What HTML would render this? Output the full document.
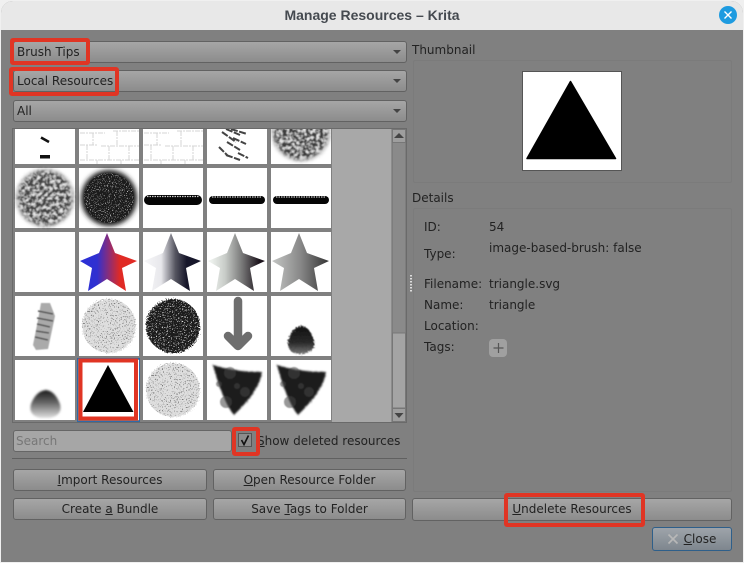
<!DOCTYPE html>
<html><head><meta charset="utf-8"><style>
html,body{margin:0;padding:0;background:#fff}
#w{position:relative;width:744px;height:563px;overflow:hidden;background:#f0f0f0;font:12px/16px "DejaVu Sans",sans-serif;color:#222}
#win{position:absolute;left:1px;top:1px;width:742px;height:561px;background:#808080;border-radius:12px 12px 0 0;overflow:hidden}
#title{position:absolute;width:742px;height:29px;background:#e8e8e8;text-align:center;font:bold 14px/29px "Liberation Sans",sans-serif;color:#454a50}
.a{position:absolute}
.t{position:absolute;white-space:nowrap}
.c,.b{position:absolute;box-sizing:border-box;border:1px solid #626262;border-radius:3px;background:linear-gradient(#a6a6a6,#8c8c8c)}
.b{text-align:center;line-height:20px;white-space:nowrap}
.c span{position:absolute;left:3px;top:2px;white-space:nowrap}
.c i{position:absolute;right:5px;top:8px;border:4px solid transparent;border-top:4px solid #444;border-bottom:0}
.f{position:absolute;box-sizing:border-box;border:1px solid #7b7b7b;border-radius:2px}
.r{position:absolute;box-sizing:border-box;border:4px solid #e03524;border-radius:3px}
u{text-decoration:underline}
</style></head><body><div id="w">
<div id="win"></div>
<div id="title" style="left:1px;top:1px;border-radius:12px 12px 0 0">Manage Resources – Krita</div>
<svg class="a" style="left:719px;top:6px" width="18" height="18"><circle cx="9" cy="9" r="9" fill="#1e9be0"/><path d="M5.500 5.500L12.500 12.500M12.500 5.500L5.500 12.500" stroke="#fff" stroke-width="1.400"/></svg>

<div class="c" style="left:13px;top:41px;width:394px;height:22px"><span>Brush Tips</span><i></i></div>
<div class="c" style="left:13px;top:70px;width:394px;height:22px"><span>Local Resources</span><i></i></div>
<div class="c" style="left:13px;top:100px;width:394px;height:22px"><span>All</span><i></i></div>

<div class="a" style="left:12px;top:128px;width:395px;height:295px;box-sizing:border-box;border:1px solid #6a6a6a;background:#a8a8a8;overflow:hidden"></div>
<svg class="a" style="left:13px;top:129px" width="393" height="293" viewBox="13 129 393 293">
<defs>
<filter id="sp" x="-10%" y="-10%" width="120%" height="120%"><feTurbulence type="fractalNoise" baseFrequency=".95" numOctaves="2" seed="3"/><feColorMatrix values="0 0 0 0 .8 0 0 0 0 .8 0 0 0 0 .8 6 0 0 0 -3.700"/><feComposite in2="SourceGraphic" operator="in" result="n"/><feMerge><feMergeNode in="SourceGraphic"/><feMergeNode in="n"/></feMerge></filter>
<filter id="sp2" x="-15%" y="-15%" width="130%" height="130%"><feTurbulence type="fractalNoise" baseFrequency=".8" numOctaves="2" seed="11" result="t"/><feDisplacementMap in="SourceGraphic" in2="t" scale="6" result="d"/><feColorMatrix in="t" values="0 0 0 0 .85 0 0 0 0 .85 0 0 0 0 .85 7 0 0 0 -4.300"/><feComposite in2="d" operator="in" result="n"/><feMerge><feMergeNode in="d"/><feMergeNode in="n"/></feMerge></filter>
<filter id="big" x="-15%" y="-15%" width="130%" height="130%"><feGaussianBlur in="SourceGraphic" stdDeviation="2" result="s"/><feTurbulence type="fractalNoise" baseFrequency=".3" numOctaves="3" seed="5"/><feColorMatrix values="0 0 0 0 .8 0 0 0 0 .8 0 0 0 0 .8 3.500 0 0 0 -1.500"/><feComposite in2="s" operator="in"/><feGaussianBlur stdDeviation=".5" result="n"/><feMerge><feMergeNode in="s"/><feMergeNode in="n"/></feMerge></filter>
<filter id="lite" x="-15%" y="-15%" width="130%" height="130%"><feTurbulence type="fractalNoise" baseFrequency=".75" numOctaves="2" seed="9" result="t"/><feDisplacementMap in="SourceGraphic" in2="t" scale="5" result="d"/><feColorMatrix in="t" values="0 0 0 0 .15 0 0 0 0 .15 0 0 0 0 .15 8 0 0 0 -4.700"/><feComposite in2="d" operator="in" result="n"/><feMerge><feMergeNode in="d"/><feMergeNode in="n"/></feMerge></filter>
<filter id="cut" x="-20%" y="-20%" width="140%" height="140%"><feTurbulence type="fractalNoise" baseFrequency=".7" numOctaves="2" seed="7" result="t"/><feDisplacementMap in="SourceGraphic" in2="t" scale="2"/><feGaussianBlur stdDeviation=".9"/></filter>
<filter id="cut2" x="-20%" y="-20%" width="140%" height="140%"><feTurbulence type="fractalNoise" baseFrequency=".8" numOctaves="2" seed="4" result="t"/><feDisplacementMap in="SourceGraphic" in2="t" scale="5"/><feGaussianBlur stdDeviation=".6"/></filter>
<filter id="bl05"><feGaussianBlur stdDeviation=".6"/></filter>
<filter id="bl1"><feGaussianBlur stdDeviation="1"/></filter>
<filter id="bl2" x="-15%" y="-15%" width="130%" height="130%"><feGaussianBlur stdDeviation="2.500"/></filter>
<linearGradient id="g1"><stop offset="0" stop-color="#2a2fd8"/><stop offset=".3" stop-color="#3030d0"/><stop offset=".7" stop-color="#e02a24"/></linearGradient>
<linearGradient id="g2"><stop offset=".05" stop-color="#f4f4f6"/><stop offset=".3" stop-color="#e8e8ec"/><stop offset=".55" stop-color="#555560"/><stop offset=".75" stop-color="#16162a"/></linearGradient>
<linearGradient id="g3"><stop offset=".05" stop-color="#eef2ee"/><stop offset=".3" stop-color="#c8ccc8"/><stop offset=".6" stop-color="#777"/><stop offset=".9" stop-color="#1c141c"/></linearGradient>
<linearGradient id="g4"><stop offset="0" stop-color="#c4c6c4"/><stop offset=".5" stop-color="#888"/><stop offset="1" stop-color="#333"/></linearGradient>
<linearGradient id="gd" x1="0" y1="0" x2="0" y2="1"><stop offset="0" stop-color="#1c1c1c"/><stop offset=".45" stop-color="#666"/><stop offset="1" stop-color="#e0e0e0"/></linearGradient>
<linearGradient id="gd2" x1="0" y1="0" x2="0" y2="1"><stop offset="0" stop-color="#111"/><stop offset=".6" stop-color="#2a2a2a"/><stop offset="1" stop-color="#777"/></linearGradient>
<path id="star" d="M28 1L36 21L58 29L43 36L47 59L28 47L9 59L13 36L1 29L20 21Z"/>
<g id="bricks" stroke="#d4d4d4" stroke-width="1" fill="none" stroke-dasharray="5 1 2 1"><path d="M1 4H26M34 2H60M1 16H18M22 17H60M14 4V16M38 2V17M1 31H60M8 16V31M30 17V31M50 17V31M18 31V35M42 31V35"/></g>
<g id="pie" filter="url(#bl05)"><path d="M6 5Q28 12 55 12Q53 30 27 55Q16 42 6 5Z" fill="#1e1e1e" filter="url(#cut)"/><g fill="#444" fill-opacity=".55"><circle cx="23" cy="13" r="6"/><circle cx="19" cy="42" r="6"/><circle cx="38" cy="32" r="5"/><circle cx="30" cy="26" r="3"/><circle cx="12" cy="24" r="3"/></g></g>
<circle id="spk" r="27" fill="#dedede" filter="url(#lite)"/>
</defs>
<rect x="13" y="129" width="319" height="293" fill="#808080"/>
<!-- row 1 -->
<g fill="#fff"><rect x="15" y="129" width="60" height="35"/><rect x="79" y="129" width="60" height="35"/><rect x="143" y="129" width="60" height="35"/><rect x="207" y="129" width="60" height="35"/><rect x="271" y="129" width="60" height="35"/></g>
<path d="M41 137.500L49 142" stroke="#111" stroke-width="2.600"/><rect x="40" y="155" width="10" height="3.500" fill="#111"/>
<g transform="translate(79 129)"><use href="#bricks"/></g><g transform="translate(143 129)"><use href="#bricks"/></g>
<path d="M226 129L240 135M222 132L236 142M231 129L247 134M219 147L228 156M227 142L240 150M226 155L240 160M238 153L248 158M233 138L246 144" stroke="#444" stroke-width="2" stroke-dasharray="7 1.500"/>
<clipPath id="cr1"><rect x="271" y="129" width="60" height="35"/></clipPath>
<g clip-path="url(#cr1)"><circle cx="301" cy="132" r="28" fill="#3c3c3c" filter="url(#big)"/></g>
<!-- row 2 -->
<g fill="#fff"><rect x="15" y="168" width="60" height="60"/><rect x="79" y="168" width="60" height="60"/><rect x="143" y="168" width="60" height="60"/><rect x="207" y="168" width="60" height="60"/><rect x="271" y="168" width="60" height="60"/></g>
<circle cx="45" cy="198" r="28" fill="#444" filter="url(#big)"/>
<circle cx="109" cy="198" r="28" fill="#222" filter="url(#bl2)"/><circle cx="109" cy="198" r="25" fill="#1a1a1a" filter="url(#sp)" opacity=".95"/>
<rect x="144" y="195" width="58" height="10" rx="5" fill="#050505"/><rect x="209" y="196" width="56" height="8" rx="4" fill="#050505"/><rect x="273" y="196" width="56" height="8" rx="4" fill="#050505"/>
<path d="M147 196.500H199M212 197H262M276 197H326" stroke="#ccc" stroke-width="1.200" stroke-dasharray="1.500 1"/>
<!-- row 3 -->
<g fill="#fff"><rect x="15" y="232" width="60" height="60"/><rect x="79" y="232" width="60" height="60"/><rect x="143" y="232" width="60" height="60"/><rect x="207" y="232" width="60" height="60"/><rect x="271" y="232" width="60" height="60"/></g>
<use href="#star" transform="translate(79 232)" fill="url(#g1)"/><use href="#star" transform="translate(143 232)" fill="url(#g2)"/><use href="#star" transform="translate(207 232)" fill="url(#g3)"/><use href="#star" transform="translate(271 232)" fill="url(#g4)"/>
<!-- row 4 -->
<g fill="#fff"><rect x="15" y="296" width="60" height="60"/><rect x="79" y="296" width="60" height="60"/><rect x="143" y="296" width="60" height="60"/><rect x="207" y="296" width="60" height="60"/><rect x="271" y="296" width="60" height="60"/></g>
<g filter="url(#bl05)"><path d="M41 303H50L55 316L48 349L36 350L33 345L38 320Z" fill="#aaa"/><path d="M38 311L53 314M37 318L53 321M37 324L50 327M36 331L49 333M35 337L48 340" stroke="#555" stroke-width="1.600"/></g>
<use href="#spk" x="109" y="326"/>
<circle cx="173" cy="326" r="27" fill="#1c1c1c" filter="url(#sp2)"/>
<path d="M238 301V344M228 336L238 346L248 336" fill="none" stroke="#6e6e6e" stroke-width="8.500" stroke-linecap="round" stroke-linejoin="round"/>
<path d="M301 326Q309 326 313 338Q318 351 303 354Q287 355 288 342Q291 328 301 326Z" fill="url(#gd2)" filter="url(#cut2)"/>
<!-- row 5 -->
<g fill="#fff"><rect x="15" y="360" width="60" height="60"/><rect x="79" y="360" width="60" height="60"/><rect x="143" y="360" width="60" height="60"/><rect x="207" y="360" width="60" height="60"/><rect x="271" y="360" width="60" height="60"/></g>
<path d="M46 390Q55 391 60 404Q63 415 50 418H40Q28 415 31 404Q36 391 46 390Z" fill="url(#gd)" filter="url(#bl1)"/>
<use href="#spk" x="173" y="390"/>
<g transform="translate(207 360)"><use href="#pie"/></g><g transform="translate(271 360)"><use href="#pie"/></g>
<!-- selected -->
<rect x="77.500" y="358.500" width="62" height="63" fill="none" stroke="#2f6aa8" stroke-width="1"/>
<rect x="79" y="359" width="59" height="61" fill="#fff"/>
<path d="M108 365L133.500 412H83Z" fill="#000"/>
<rect x="80.500" y="360.500" width="55.500" height="58" fill="none" stroke="#e03524" stroke-width="4"/>
<!-- scrollbar -->
<rect x="392" y="129" width="14" height="293" fill="#8a8a8a" stroke="#707070"/>
<rect x="392.500" y="129.500" width="13" height="13" fill="#9e9e9e" stroke="#777"/>
<path d="M399 133L404 138H394Z" fill="#444"/>
<rect x="392.500" y="333" width="13" height="75" fill="#a4a4a4" stroke="#777"/>
<rect x="392.500" y="408.500" width="13" height="13" fill="#9e9e9e" stroke="#777"/>
<path d="M394.500 413H403.500L399 418Z" fill="#444"/>
</svg>

<div class="a" style="left:13px;top:430px;width:219px;height:22px;box-sizing:border-box;border:1px solid #666;border-radius:3px;background:#a6a6a6;color:#777;padding:2px 2px">Search</div>
<div class="a" style="left:238px;top:433px;width:14px;height:14px;box-sizing:border-box;border:1px solid #555;background:#8c8c8c"></div>
<svg class="a" style="left:238px;top:433px" width="14" height="14"><path d="M3.500 7L6 11.500L10.500 2.500" fill="none" stroke="#111" stroke-width="1.600"/></svg>
<div class="t" style="left:257px;top:433px;letter-spacing:-.01px"><u>S</u>how deleted resources</div>
<div class="a" style="left:12px;top:458px;width:395px;height:1px;background:#606060"></div>

<div class="b" style="left:13px;top:469px;width:194px;height:22px"><u>I</u>mport Resources</div>
<div class="b" style="left:213px;top:469px;width:193px;height:22px"><u>O</u>pen Resource Folder</div>
<div class="b" style="left:13px;top:498px;width:194px;height:22px">Create <u>a</u> Bundle</div>
<div class="b" style="left:213px;top:498px;width:193px;height:22px">Save <u>T</u>ags to Folder</div>
<div class="b" style="left:412px;top:498px;width:320px;height:23px;line-height:21px"><u>U</u>ndelete Resources</div>
<div class="b" style="left:652px;top:527px;width:80px;height:24px;border-color:#2e5f8a;background:linear-gradient(#9ea4aa,#7e868e);line-height:22px;padding-left:16px;box-sizing:border-box"><u>C</u>lose</div>
<svg class="a" style="left:667px;top:533px" width="12" height="12"><path d="M1.500 1.500L10.500 10.500M10.500 1.500L1.500 10.500" stroke="#b8b8b8" stroke-width="1.600"/></svg>

<div class="t" style="left:412px;top:42px">Thumbnail</div>
<div class="f" style="left:413px;top:60px;width:319px;height:123px"></div>
<div class="a" style="left:522px;top:71px;width:100px;height:100px;box-sizing:border-box;border:1px solid #555;background:#fff"></div>
<svg class="a" style="left:522px;top:71px" width="100" height="100"><path d="M48.500 10.500L93.500 87.500H5Z" fill="#000" stroke="#000" stroke-width="1.500" stroke-linejoin="round"/></svg>

<div class="t" style="left:412px;top:190px">Details</div>
<div class="f" style="left:413px;top:208px;width:319px;height:284px"></div>
<div class="t" style="left:424px;top:219px">ID:</div><div class="t" style="left:489px;top:219px">54</div>
<div class="t" style="left:424px;top:246px">Type:</div><div class="t" style="left:489px;top:240px">image-based-brush: false</div>
<div class="t" style="left:424px;top:276px">Filename:</div><div class="t" style="left:489px;top:276px">triangle.svg</div>
<div class="t" style="left:424px;top:297px">Name:</div><div class="t" style="left:489px;top:297px">triangle</div>
<div class="t" style="left:424px;top:318px">Location:</div>
<div class="t" style="left:424px;top:339px">Tags:</div>
<div class="a" style="left:489px;top:339px;width:18px;height:18px;border-radius:4px;background:#a0a0a0"></div>
<svg class="a" style="left:489px;top:339px" width="18" height="18"><path d="M9.500 4V14M4.500 9H14.500" stroke="#555" stroke-width="1.200"/></svg>
<svg class="a" style="left:410px;top:274px" width="3" height="18"><path d="M1 1V18" stroke="#ddd" stroke-width="2" stroke-dasharray="1.500 1.500"/></svg>

<div class="r" style="left:10px;top:38px;width:80px;height:27px"></div>
<div class="r" style="left:9px;top:67px;width:110px;height:29px"></div>
<div class="r" style="left:232px;top:427px;width:28px;height:29px"></div>
<div class="r" style="left:504px;top:493px;width:141px;height:34px"></div>
</div></body></html>
